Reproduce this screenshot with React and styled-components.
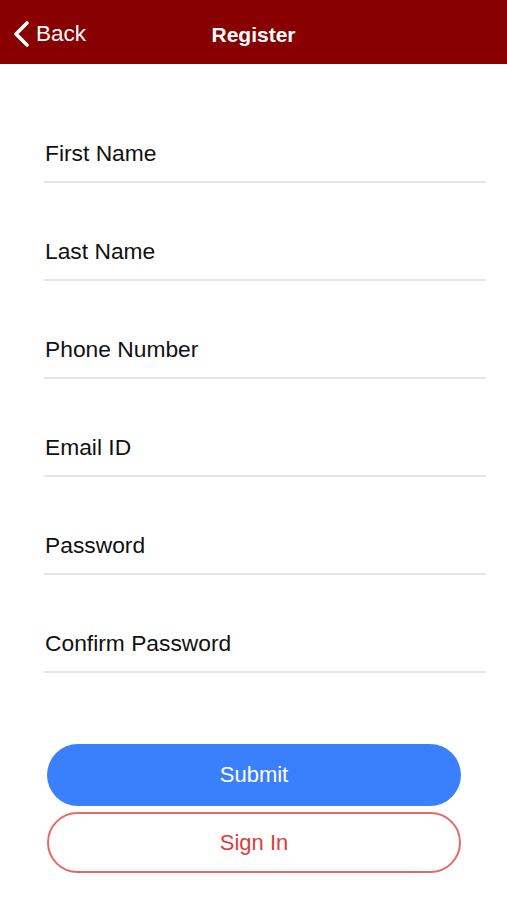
import React from 'react'
import styled, { createGlobalStyle } from 'styled-components'

const GlobalStyle = createGlobalStyle`
  body {
    margin: 0;
    background: #fff;
    font-family: 'Liberation Sans', Arial, sans-serif;
  }
`

const Page = styled.div`
  width: 507px;
  min-height: 900px;
  background: #fff;
`

const Header = styled.header`
  position: relative;
  height: 64px;
  background: #880000;
  display: flex;
  align-items: center;
  justify-content: center;
  padding-top: 5px;
  box-sizing: border-box;
  color: #fff;
`

const BackButton = styled.button`
  position: absolute;
  left: 12px;
  top: 2px;
  height: 64px;
  display: flex;
  align-items: center;
  gap: 6px;
  background: none;
  border: none;
  padding: 0;
  color: #fff;
  font-family: inherit;
  font-size: 22.5px;
`

const Title = styled.h1`
  margin: 0;
  font-size: 21px;
  font-weight: 700;
`

const Form = styled.div`
  padding: 21px 21px 0 44px;
`

const Field = styled.div`
  height: 98px;
  display: flex;
  flex-direction: column;
  justify-content: flex-end;
  border-bottom: 2px solid #e6e6e6;
  box-sizing: border-box;
`

const Label = styled.span`
  font-size: 22.8px;
  line-height: 26px;
  color: #111;
  padding: 0 0 15px 1px;
`

const Buttons = styled.div`
  display: flex;
  flex-direction: column;
  gap: 6px;
  padding: 71px 46px 0 47px;
`

const Button = styled.button`
  height: ${(p) => (p.outline ? '61px' : '62px')};
  border-radius: 31px;
  font-family: inherit;
  font-size: 22px;
  background: ${(p) => (p.outline ? '#fff' : '#3a80fc')};
  color: ${(p) => (p.outline ? '#e03c3c' : '#fff')};
  border: ${(p) => (p.outline ? '2px solid #e86868' : 'none')};
`

const fields = ['First Name', 'Last Name', 'Phone Number', 'Email ID', 'Password', 'Confirm Password']

export default () => (
  <Page>
    <GlobalStyle />
    <Header>
      <BackButton>
        <svg width="18" height="28" viewBox="0 0 18 28">
          <path d="M15 3 L4 14 L15 25" fill="none" stroke="#fff" strokeWidth="3.6" strokeLinecap="round" strokeLinejoin="round" />
        </svg>
        Back
      </BackButton>
      <Title>Register</Title>
    </Header>
    <Form>
      {fields.map((f) => (
        <Field key={f}>
          <Label>{f}</Label>
        </Field>
      ))}
    </Form>
    <Buttons>
      <Button>Submit</Button>
      <Button outline>Sign In</Button>
    </Buttons>
  </Page>
)
